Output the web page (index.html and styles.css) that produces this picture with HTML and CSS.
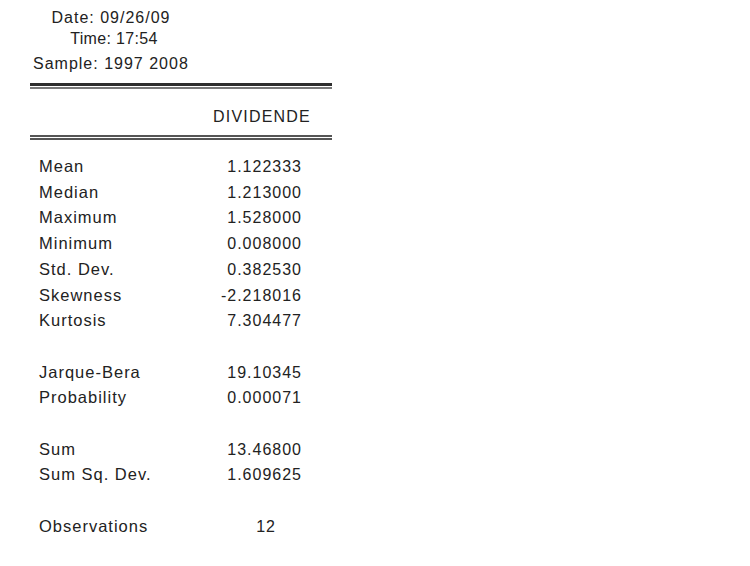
FILE: index.html
```html
<!DOCTYPE html>
<html>
<head>
<meta charset="utf-8">
<link rel="stylesheet" href="styles.css">
</head>
<body>
<div class="page">
  <div class="meta">
    <div class="meta-line">Date: 09/26/09</div>
    <div class="meta-line time">Time: 17:54</div>
  </div>
  <div class="sample">Sample: 1997 2008</div>
  <div class="table">
    <div class="rule-top"></div>
    <div class="head">DIVIDENDE</div>
    <div class="rule-bottom"></div>
    <div class="group first">
      <div class="row"><span class="lbl">Mean</span><span class="val">1.122333</span></div>
      <div class="row"><span class="lbl">Median</span><span class="val">1.213000</span></div>
      <div class="row"><span class="lbl">Maximum</span><span class="val">1.528000</span></div>
      <div class="row"><span class="lbl">Minimum</span><span class="val">0.008000</span></div>
      <div class="row"><span class="lbl">Std. Dev.</span><span class="val">0.382530</span></div>
      <div class="row"><span class="lbl">Skewness</span><span class="val">-2.218016</span></div>
      <div class="row"><span class="lbl">Kurtosis</span><span class="val">7.304477</span></div>
    </div>
    <div class="group">
      <div class="row"><span class="lbl">Jarque-Bera</span><span class="val">19.10345</span></div>
      <div class="row"><span class="lbl">Probability</span><span class="val">0.000071</span></div>
    </div>
    <div class="group">
      <div class="row"><span class="lbl">Sum</span><span class="val">13.46800</span></div>
      <div class="row"><span class="lbl">Sum Sq. Dev.</span><span class="val">1.609625</span></div>
    </div>
    <div class="group">
      <div class="row"><span class="lbl">Observations</span><span class="val obs">12</span></div>
    </div>
  </div>
</div>
</body>
</html>
```

FILE: styles.css
```css
html, body {
  margin: 0;
  padding: 0;
  background: #ffffff;
}
body {
  font-family: "Liberation Sans", Arial, sans-serif;
  font-size: 16px;
  color: #222222;
  letter-spacing: 1px;
}
.page {
  padding-top: 7px;
}
.meta {
  width: 222px;
  text-align: center;
}
.meta-line {
  line-height: 21px;
}
.meta-line.time {
  letter-spacing: 0.35px;
  padding-left: 6px;
}
.sample {
  margin-top: 4px;
  line-height: 21px;
  padding-left: 33px;
}
.table {
  margin-left: 30px;
  width: 302px;
  margin-top: 9px;
}
.rule-top {
  height: 1px;
  border-top: 3px solid #2e2e2e;
  border-bottom: 2px solid #7a7a7a;
}
.head {
  margin-top: 17px;
  line-height: 21px;
  text-align: right;
  padding-right: 21px;
  letter-spacing: 1.2px;
}
.rule-bottom {
  margin-top: 8px;
  height: 1px;
  border-top: 2px solid #555555;
  border-bottom: 2px solid #555555;
}
.group {
  margin-top: 25.7px;
}
.group.first {
  margin-top: 14px;
}
.row {
  display: flex;
  justify-content: space-between;
  align-items: baseline;
  line-height: 25.7px;
  padding-left: 9px;
  padding-right: 30px;
}
.lbl {
  font-size: 16.5px;
}
.val.obs {
  padding-right: 26px;
}
```
